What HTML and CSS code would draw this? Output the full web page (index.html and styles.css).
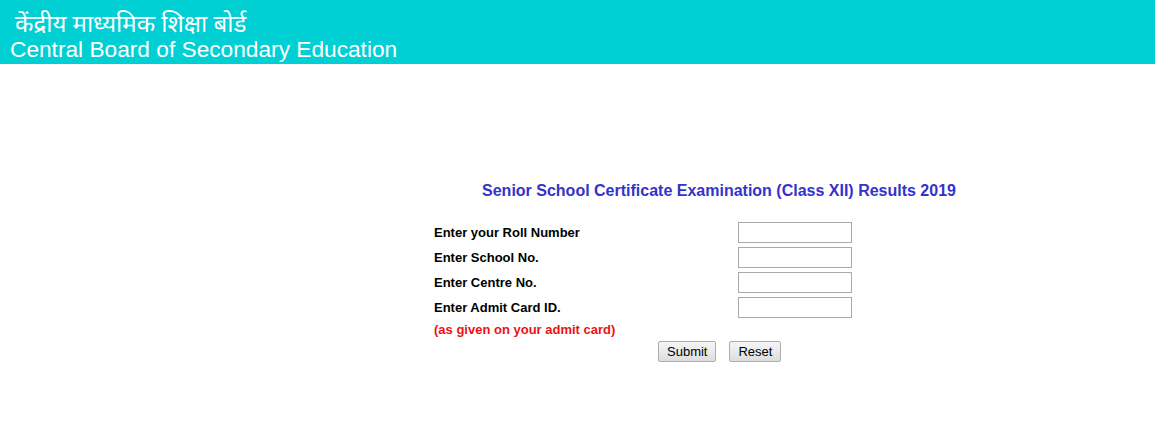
FILE: index.html
```html
<!DOCTYPE html>
<html lang="en">
<head>
    <meta charset="UTF-8">
    <title>CBSE Results 2019</title>
    <link rel="stylesheet" href="styles.css">
</head>
<body>
    <div class="header">
        <div class="hindi">केंद्रीय माध्यमिक शिक्षा बोर्ड</div>
        <div class="english">Central Board of Secondary Education</div>
    </div>

    <div class="content">
        <h2 class="title">Senior School Certificate Examination (Class XII) Results 2019</h2>
        <form class="result-form">
            <div class="row">
                <label for="roll">Enter your Roll Number</label>
                <input type="text" id="roll">
            </div>
            <div class="row">
                <label for="school">Enter School No.</label>
                <input type="text" id="school">
            </div>
            <div class="row">
                <label for="centre">Enter Centre No.</label>
                <input type="text" id="centre">
            </div>
            <div class="row">
                <label for="admit">Enter Admit Card ID.</label>
                <input type="text" id="admit">
            </div>
            <div class="note">(as given on your admit card)</div>
            <div class="buttons">
                <button type="submit">Submit</button>
                <button type="reset">Reset</button>
            </div>
        </form>
    </div>
</body>
</html>
```

FILE: styles.css
```css
/* Global */
body {
    margin: 0;
    font-family: 'Liberation Sans', Arial, sans-serif;
    background: #ffffff;
    color: #000000;
}

/* Header band */
.header {
    background: #00cfd3;
    height: 64px;
    color: #ffffff;
    padding: 0 10px;
    box-sizing: border-box;
}

.hindi {
    font-family: 'Noto Sans', 'Liberation Sans', sans-serif;
    font-size: 24px;
    padding: 8px 0 0 5px;
    height: 28px;
    line-height: 30px;
}

.english {
    font-size: 22.7px;
    line-height: 26px;
}

/* Content */
.content {
    width: 586px;
    margin-left: 426px;
    padding-top: 117px;
}

.title {
    margin: 0 0 21px 0;
    font-size: 16px;
    font-weight: bold;
    color: #3333cc;
    text-align: center;
    line-height: 20px;
}

.result-form {
    padding-left: 8px;
}

.row {
    display: grid;
    grid-template-columns: 304px 114px;
    align-items: center;
    height: 21px;
    margin-bottom: 4px;
}

label,
.note {
    font-size: 13px;
    font-weight: bold;
}

.note {
    color: #ee1111;
    margin-top: 4px;
    line-height: 15px;
}

input[type="text"] {
    width: 114px;
    height: 21px;
    box-sizing: border-box;
    border: 1px solid #a9a9a9;
    padding: 1px 2px;
    margin: 0;
}

.buttons {
    display: flex;
    gap: 13px;
    padding-left: 224px;
    margin-top: 4px;
}

button {
    font-family: 'Liberation Sans', Arial, sans-serif;
    font-size: 13px;
    height: 21px;
    padding: 0 8px;
    border: 1px solid #adadad;
    border-radius: 2px;
    background: linear-gradient(#f6f6f6, #dddddd);
    color: #000000;
}
```
